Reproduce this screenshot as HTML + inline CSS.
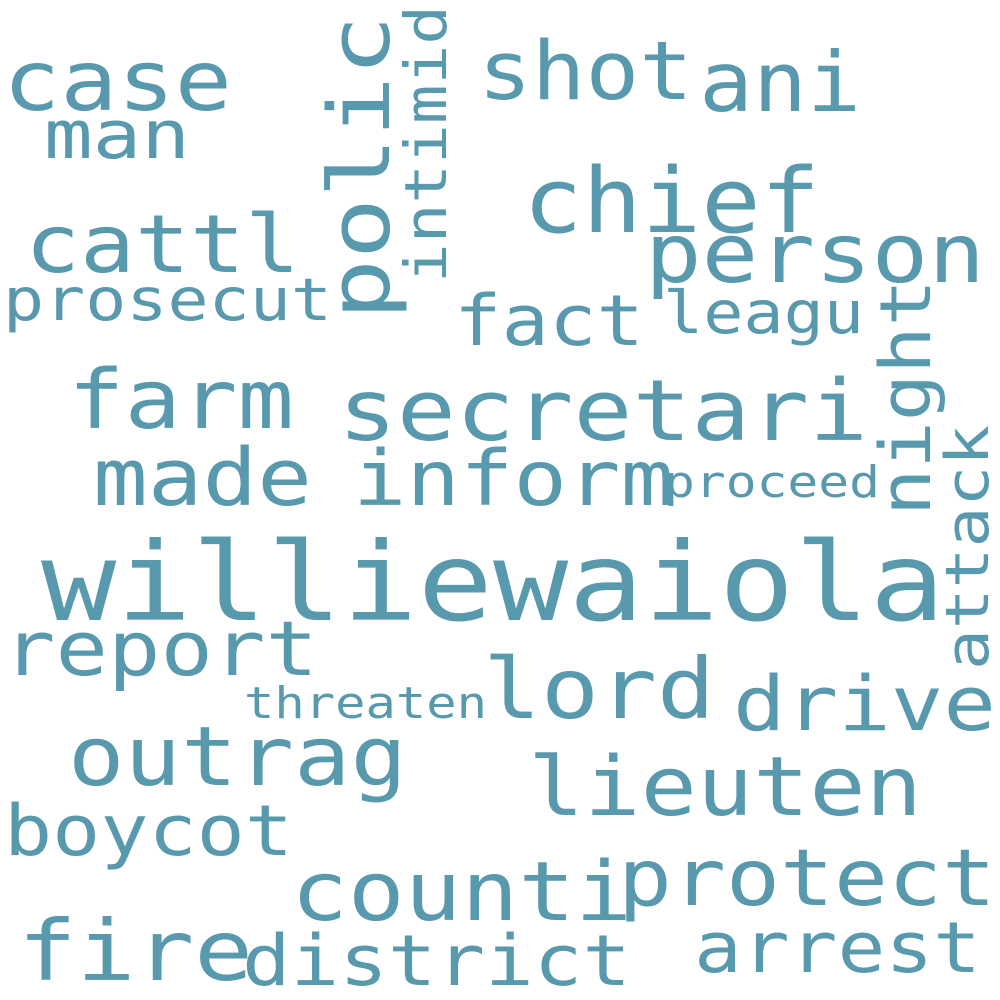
<!DOCTYPE html>
<html><head><meta charset="utf-8"><style>
html,body{margin:0;padding:0;background:#fff;width:1000px;height:1000px;overflow:hidden}
svg text{font-family:"DejaVu Sans Mono","Liberation Mono",monospace;fill:#5899ae}
</style></head><body>
<svg width="1000" height="1000" xmlns="http://www.w3.org/2000/svg" viewBox="0 0 1000 1000">
<rect width="1000" height="1000" fill="#fff"/>
<g>
<text x="3" y="110" font-size="84" textLength="229" lengthAdjust="spacingAndGlyphs">case</text>
<text x="44" y="158" font-size="67" textLength="146" lengthAdjust="spacingAndGlyphs">man</text>
<text x="25" y="272" font-size="80" textLength="275" lengthAdjust="spacingAndGlyphs">cattl</text>
<text x="3" y="320" font-size="59" textLength="329" lengthAdjust="spacingAndGlyphs">prosecut</text>
<text x="478" y="99" font-size="81" textLength="215" lengthAdjust="spacingAndGlyphs">shot</text>
<text x="699" y="111" font-size="83" textLength="162" lengthAdjust="spacingAndGlyphs">ani</text>
<text x="523" y="232" font-size="90" textLength="297" lengthAdjust="spacingAndGlyphs">chief</text>
<text x="645" y="282" font-size="82" textLength="340" lengthAdjust="spacingAndGlyphs">person</text>
<text x="454" y="345" font-size="70" textLength="190" lengthAdjust="spacingAndGlyphs">fact</text>
<text x="663" y="333" font-size="59" textLength="201" lengthAdjust="spacingAndGlyphs">leagu</text>
<text x="68" y="428" font-size="82" textLength="226" lengthAdjust="spacingAndGlyphs">farm</text>
<text x="338" y="440" font-size="85" textLength="530" lengthAdjust="spacingAndGlyphs">secretari</text>
<text x="93" y="505" font-size="79" textLength="219" lengthAdjust="spacingAndGlyphs">made</text>
<text x="353" y="505" font-size="77" textLength="321" lengthAdjust="spacingAndGlyphs">inform</text>
<text x="664" y="497" font-size="44" textLength="216" lengthAdjust="spacingAndGlyphs">proceed</text>
<text x="41" y="620" font-size="109" textLength="904" lengthAdjust="spacingAndGlyphs">williewaiola</text>
<text x="3" y="675" font-size="76" textLength="315" lengthAdjust="spacingAndGlyphs">report</text>
<text x="483" y="718" font-size="84" textLength="232" lengthAdjust="spacingAndGlyphs">lord</text>
<text x="244" y="718" font-size="44" textLength="243" lengthAdjust="spacingAndGlyphs">threaten</text>
<text x="733" y="730" font-size="76" textLength="263" lengthAdjust="spacingAndGlyphs">drive</text>
<text x="68" y="785" font-size="82" textLength="339" lengthAdjust="spacingAndGlyphs">outrag</text>
<text x="528" y="815" font-size="82" textLength="394" lengthAdjust="spacingAndGlyphs">lieuten</text>
<text x="4" y="855" font-size="70" textLength="289" lengthAdjust="spacingAndGlyphs">boycot</text>
<text x="291" y="920" font-size="82" textLength="341" lengthAdjust="spacingAndGlyphs">counti</text>
<text x="618" y="905" font-size="78" textLength="378" lengthAdjust="spacingAndGlyphs">protect</text>
<text x="18" y="980" font-size="84" textLength="235" lengthAdjust="spacingAndGlyphs">fire</text>
<text x="242" y="985" font-size="70" textLength="389" lengthAdjust="spacingAndGlyphs">district</text>
<text x="694" y="972" font-size="70" textLength="287" lengthAdjust="spacingAndGlyphs">arrest</text>
<text transform="translate(389,320) rotate(-90)" font-size="85" textLength="305" lengthAdjust="spacingAndGlyphs">polic</text>
<text transform="translate(446,283) rotate(-90)" font-size="58" textLength="278" lengthAdjust="spacingAndGlyphs">intimid</text>
<text transform="translate(930,516) rotate(-90)" font-size="70" textLength="237" lengthAdjust="spacingAndGlyphs">night</text>
<text transform="translate(988,670) rotate(-90)" font-size="60" textLength="245" lengthAdjust="spacingAndGlyphs">attack</text>
</g>
</svg>
</body></html>
